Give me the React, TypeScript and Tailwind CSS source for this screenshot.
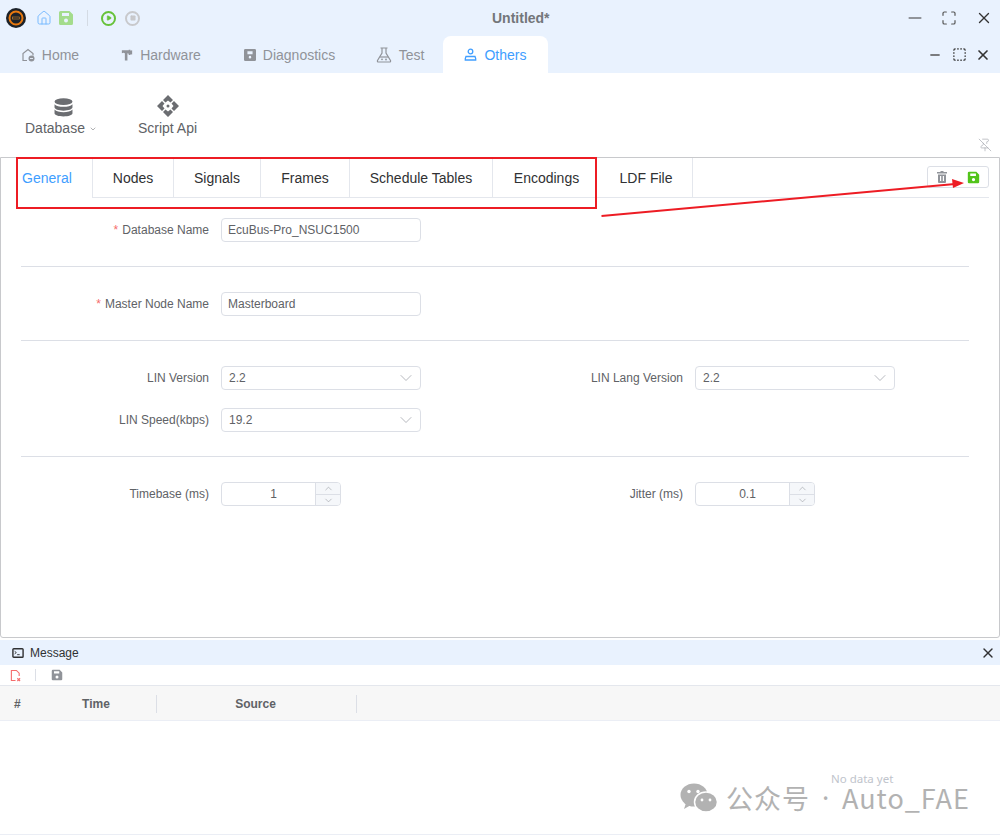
import { ChevronDown, ChevronUp, Minus, Play, Square, X, Home, Maximize, PinOff, SquareDashed } from "lucide-react";
import type { ReactNode } from "react";

const font = { fontFamily: '"Liberation Sans", Arial, sans-serif' };

function SaveIcon({ className }: { className: string }) {
  return (
    <svg viewBox="0 0 16 16" className={className} fill="currentColor">
      <path d="M2.5 1h9L15 4.500v9a1.500 1.500 0 0 1-1.500 1.500h-11A1.500 1.500 0 0 1 1 13.500v-11A1.500 1.500 0 0 1 2.500 1zM4 3v3h7V3zm4 5.500a2 2 0 1 0 0 4 2 2 0 0 0 0-4z" fillRule="evenodd" />
    </svg>
  );
}

function HomeBadgeIcon() {
  return (
    <svg viewBox="0 0 14 14" className="h-[14px] w-[14px]" fill="none" stroke="currentColor" strokeWidth="1.200">
      <path d="M6 12.500H2V5.500L7 1.500l5 4v2" />
      <circle cx="10.500" cy="10.500" r="3" fill="currentColor" stroke="none" />
      <path d="M9 10.500h3" stroke="#e9f2fe" strokeWidth="0.900" />
    </svg>
  );
}

function HammerIcon() {
  return (
    <svg viewBox="0 0 14 14" className="h-[14px] w-3" fill="currentColor">
      <path d="M1 1.500h8V1h2v1l2-.5v5l-2-.5v1H9V5.500L7.500 5v8.500h-3V5L3 4.500 1 5z" />
    </svg>
  );
}

function DiagnosticsIcon() {
  return (
    <svg viewBox="0 0 14 14" className="h-[14px] w-3" fill="currentColor">
      <path d="M1.500 0h11A1.500 1.500 0 0 1 14 1.500v11a1.500 1.500 0 0 1-1.500 1.500h-11A1.500 1.500 0 0 1 0 12.500v-11A1.500 1.500 0 0 1 1.500 0zM4 2.500V6h6V2.500zM7 8a1.500 1.500 0 1 0 0 3 1.500 1.500 0 0 0 0-3z" fillRule="evenodd" />
    </svg>
  );
}

function FlaskIcon() {
  return (
    <svg viewBox="0 0 16 16" className="h-4 w-4" fill="none" stroke="currentColor" strokeWidth="1.200">
      <path d="M4.500 1h7M6 1v5L1.500 13.500c-.4.800.1 1.500 1 1.500h11c.9 0 1.400-.7 1-1.500L10 6V1" />
      <path d="M4 10h8" />
      <circle cx="6" cy="12.300" r="0.900" fill="currentColor" stroke="none" />
      <circle cx="10" cy="12.500" r="0.900" fill="currentColor" stroke="none" />
    </svg>
  );
}

function PersonIcon() {
  return (
    <svg viewBox="0 0 13 13" className="h-[13px] w-[13px]" fill="none" stroke="currentColor" strokeWidth="1.300">
      <circle cx="6.500" cy="3.500" r="2.300" />
      <path d="M2 8.500h9l.7 2v1.500H1.300v-1.500z" />
    </svg>
  );
}

function TrashIcon() {
  return (
    <svg viewBox="0 0 10 12" className="h-3 w-[10px]" fill="#909399">
      <path d="M3.500 0h3v1H10v1.500H0V1h3.500zM1 3.500h8V11a1 1 0 0 1-1 1H2a1 1 0 0 1-1-1zM3 5v5h1.200V5zm2.800 0v5H7V5z" fillRule="evenodd" />
    </svg>
  );
}

function NavTab({ icon, label, active, width }: { icon: ReactNode; label: string; active?: boolean; width: string }) {
  return (
    <div className={`${width} flex h-[37px] items-center justify-center gap-[7px] text-sm ${active ? "rounded-t-lg bg-white text-[#409eff]" : "text-[#909399]"}`}>
      {icon}
      <span>{label}</span>
    </div>
  );
}

function SubTab({ label, width, active, last }: { label: string; width: string; active?: boolean; last?: boolean }) {
  return (
    <div className={`${width} flex h-10 items-center text-sm ${last ? "" : "border-r"} border-[#e4e7ed] ${active ? "justify-start pl-[1px] text-[#409eff]" : "justify-center border-b text-[#303133]"}`}>
      {label}
    </div>
  );
}

function Label({ text, required }: { text: string; required?: boolean }) {
  return (
    <label className="w-[188px] shrink-0 text-right text-xs text-[#606266]">
      {required && <span className="mr-1 text-[#f56c6c]">*</span>}
      {text}
    </label>
  );
}

function TextField({ label, value }: { label: string; value: string }) {
  return (
    <div className="flex h-6 items-center gap-3">
      <Label text={label} required />
      <div className="flex h-6 w-[200px] items-center rounded border border-[#dcdfe6] px-[6px] text-xs text-[#606266]">{value}</div>
    </div>
  );
}

function SelectField({ label, value }: { label: string; value: string }) {
  return (
    <div className="flex h-6 items-center gap-3">
      <Label text={label} />
      <div className="flex h-6 w-[200px] items-center justify-between rounded border border-[#dcdfe6] pl-[7px] pr-[4px] text-xs text-[#606266]">
        <span>{value}</span>
        <ChevronDown size={20} strokeWidth={1} className="text-[#a8abb2]" />
      </div>
    </div>
  );
}

function NumberField({ label, value }: { label: string; value: string }) {
  return (
    <div className="flex h-6 items-center gap-3">
      <Label text={label} />
      <div className="flex h-6 w-[120px] items-center overflow-hidden rounded border border-[#dcdfe6] text-xs text-[#606266]">
        <span className="flex-1 pl-[10px] text-center">{value}</span>
        <div className="flex h-full w-[25px] flex-col border-l border-[#dcdfe6] bg-[#f5f7fa] text-[#909399]">
          <div className="flex flex-1 items-center justify-center border-b border-[#dcdfe6]">
            <ChevronUp size={11} strokeWidth={1.2} />
          </div>
          <div className="flex flex-1 items-center justify-center">
            <ChevronDown size={11} strokeWidth={1.2} />
          </div>
        </div>
      </div>
    </div>
  );
}

export default function App() {
  return (
    <div className="relative h-[839px] w-[1000px] overflow-hidden bg-white" style={font}>
      {/* window title */}
      <div className="relative flex h-9 items-center bg-[#e9f2fe] pl-[6px]">
        <svg viewBox="0 0 20 20" className="h-5 w-5">
          <circle cx="10" cy="10" r="10" fill="#1c2229" />
          <circle cx="10" cy="10" r="6.500" fill="none" stroke="#e8790f" strokeWidth="2" />
          <rect x="6.500" y="9" width="7" height="2" fill="#1c2229" stroke="#f29a2e" strokeWidth="0.500" />
        </svg>
        <Home size={16} strokeWidth={1.5} className="ml-[10px] text-[#79bbff]" />
        <SaveIcon className="ml-[6px] h-[16px] w-[16px] text-[#a4dc8c]" />
        <div className="ml-[13px] h-4 w-px bg-[#d4dbe4]" />
        <div className="ml-[13px] flex h-[15px] w-[15px] items-center justify-center rounded-full border-2 border-[#67c23a]">
          <Play size={6} fill="#67c23a" className="text-[#67c23a]" />
        </div>
        <div className="ml-[9px] flex h-[15px] w-[15px] items-center justify-center rounded-full border-2 border-[#c8c9cc]">
          <Square size={6} fill="#c8c9cc" className="text-[#c8c9cc]" />
        </div>
        <div className="flex-1 pl-[352px] text-sm font-bold text-[#73767a]">Untitled*</div>
        <div className="flex items-center pr-[7px] text-[#555]">
          <Minus size={20} strokeWidth={1.8} className="text-[#73767a]" />
          <Maximize size={16} strokeWidth={1.8} className="ml-4" />
          <X size={18} strokeWidth={1.8} className="ml-[18px] text-[#333]" />
        </div>
      </div>

      {/* app tabs */}
      <div className="flex h-[37px] items-center bg-[#e9f2fe]">
        <NavTab width="w-[100px]" label="Home" icon={<HomeBadgeIcon />} />
        <NavTab width="w-[122px]" label="Hardware" icon={<HammerIcon />} />
        <NavTab width="w-[135px]" label="Diagnostics" icon={<DiagnosticsIcon />} />
        <NavTab width="w-[86px]" label="Test" icon={<FlaskIcon />} />
        <NavTab width="w-[105px]" label="Others" active icon={<PersonIcon />} />
        <div className="flex flex-1 items-center justify-end pr-[9px] text-[#333]">
          <Minus size={14} strokeWidth={2.8} className="text-[#555]" />
          <SquareDashed size={15} strokeWidth={2} className="ml-[10px]" />
          <X size={16} strokeWidth={2.5} className="ml-2" />
        </div>
      </div>

      {/* ribbon */}
      <div className="flex h-[84px] bg-white text-sm text-[#606266]">
        <div className="ml-[25px] flex flex-col items-center pt-[25px]">
          <svg viewBox="0 0 18 18" className="ml-[5px] h-[19px] w-[19px]" fill="#6b6d71">
            <ellipse cx="9" cy="3.500" rx="8.500" ry="3.200" />
            <path d="M.5 6c1.500 1.800 4.700 2.400 8.500 2.400S16 7.800 17.500 6v2.800c0 1.800-3.800 3.200-8.500 3.200S.5 10.600.5 8.800z" />
            <path d="M.5 11c1.500 1.800 4.700 2.400 8.500 2.400s7-.6 8.500-2.400v3.500c0 1.800-3.800 3-8.500 3s-8.500-1.200-8.500-3z" />
          </svg>
          <div className="mt-[1px] flex items-center gap-1">
            <span>Database</span>
            <ChevronDown size={8} strokeWidth={1.5} className="mt-px" />
          </div>
        </div>
        <div className="ml-[41px] flex flex-col items-center pt-[22px]">
          <svg viewBox="0 0 22 22" className="h-[22px] w-[22px]" fill="#6b6d71">
            <path d="M11 0l5 5-2.500 2.500L11 5.500 8.500 7.500 6 5z" />
            <path d="M11 22l-5-5 2.500-2.500 2.500 2 2.500-2L16 17z" />
            <path d="M0 11l5-5 2.500 2.500-2 2.500 2 2.500L5 16z" />
            <path d="M22 11l-5 5-2.500-2.500 2-2.500-2-2.500L17 6z" />
            <circle cx="11" cy="11" r="1.500" />
          </svg>
          <span className="mt-[1px]">Script Api</span>
        </div>
        <div className="flex flex-1 items-end justify-end pb-[5px] pr-[8px]">
          <PinOff size={14} strokeWidth={1.2} className="text-[#a8abb2]" />
        </div>
      </div>

      {/* database editor */}
      <div className="h-[481px] rounded-b-[3px] border border-[#c8c9cc] bg-white">
        <div className="mr-[10px] flex h-10 pl-5">
          <SubTab width="w-[72px]" label="General" active />
          <SubTab width="w-[81px]" label="Nodes" />
          <SubTab width="w-[87px]" label="Signals" />
          <SubTab width="w-[89px]" label="Frames" />
          <SubTab width="w-[143px]" label="Schedule Tables" />
          <SubTab width="w-[107px]" label="Encodings" last />
          <SubTab width="w-[93px]" label="LDF File" />
          <div className="flex flex-1 justify-end border-b border-[#e4e7ed] pt-2">
            <div className="flex h-[22px] w-[62px] items-center justify-between rounded-[3px] border border-[#dcdfe6] pl-[9px] pr-2">
              <TrashIcon />
              <SaveIcon className="h-[13px] w-[13px] text-[#52c41a]" />
            </div>
          </div>
        </div>

        <div className="ml-5 mr-[30px] flex flex-col pt-5">
          <TextField label="Database Name" value="EcuBus-Pro_NSUC1500" />
          <div className="mb-[25px] mt-6 h-px bg-[#dcdfe6]" />
          <TextField label="Master Node Name" value="Masterboard" />
          <div className="mb-[25px] mt-6 h-px bg-[#dcdfe6]" />
          <div className="grid grid-cols-2 gap-y-[18px]">
            <SelectField label="LIN Version" value="2.2" />
            <SelectField label="LIN Lang Version" value="2.2" />
            <SelectField label="LIN Speed(kbps)" value="19.2" />
          </div>
          <div className="mb-[25px] mt-6 h-px bg-[#dcdfe6]" />
          <div className="grid grid-cols-2">
            <NumberField label="Timebase (ms)" value="1" />
            <NumberField label="Jitter (ms)" value="0.1" />
          </div>
        </div>
      </div>

      {/* message panel */}
      <div className="mt-[2px] flex h-[25px] items-center justify-between bg-[#e9f2fe] pl-3 pr-1 text-xs text-[#303133]">
        <div className="flex items-center gap-[6px]">
          <svg viewBox="0 0 14 12" className="h-[10px] w-3" fill="none" stroke="#303133" strokeWidth="1.700">
            <rect x="0.900" y="0.900" width="12.200" height="10.200" rx="1" />
            <path d="M3 4l2 1.500L3 7M6 8h3" strokeWidth="1.100" />
          </svg>
          <span>Message</span>
        </div>
        <X size={16} strokeWidth={2} />
      </div>
      <div className="flex h-[21px] items-center border-b border-[#e4e7ed] pl-[10px]">
        <svg viewBox="0 0 12 14" className="h-[13px] w-[11px]" fill="none" stroke="#f56c6c" strokeWidth="1.200">
          <path d="M6 12.500H1.500v-11H7l3 3v3" />
          <path d="M8 10l3 3M11 10l-3 3" />
        </svg>
        <div className="ml-[14px] h-3 w-px bg-[#dcdfe6]" />
        <SaveIcon className="ml-[15px] h-3 w-3 text-[#909399]" />
      </div>
      <div className="flex h-[35px] items-center border-b border-[#ebeef5] bg-[#f7f7f7] pt-[1px] text-xs font-bold text-[#606266]">
        <div className="w-[36px] pl-[14px]">#</div>
        <div className="flex h-[18px] w-[121px] items-center justify-center border-r border-[#dcdfe6]">Time</div>
        <div className="flex h-[18px] w-[200px] items-center justify-center border-r border-[#dcdfe6] pr-[2px]">Source</div>
      </div>
      <div className="h-[114px] border-b border-[#ebeef5] bg-white" />

      {/* annotation drawn over the screenshot */}
      <div className="pointer-events-none absolute left-[16px] top-[157px] h-[52px] w-[581px] border-2 border-[#ed1c24]" />
      <svg className="pointer-events-none absolute left-[600px] top-[172px] h-[48px] w-[385px]" viewBox="0 0 385 48">
        <path d="M1.500 44L355 12" stroke="#ed1c24" strokeWidth="2" />
        <path d="M364 11l-12-4 1 9z" fill="#ed1c24" />
      </svg>

      {/* watermark */}
      <div className="absolute left-[680px] top-[782px] flex items-center text-[#b2b2b2]">
        <svg viewBox="0 0 38 32" className="h-8 w-[38px]" fill="#b2b2b2">
          <ellipse cx="14" cy="13" rx="13.500" ry="11.500" />
          <path d="M6 21l-2 6 7-4z" />
          <ellipse cx="26" cy="20" rx="11.500" ry="10" fill="#b2b2b2" stroke="#fff" strokeWidth="1.500" />
          <circle cx="9" cy="9.500" r="1.700" fill="#fff" />
          <circle cx="18" cy="9.500" r="1.700" fill="#fff" />
          <circle cx="22" cy="18" r="1.400" fill="#fff" />
          <circle cx="30" cy="18" r="1.400" fill="#fff" />
        </svg>
        <span className="ml-[8px] flex items-center text-[27px] leading-[26px] tracking-[1px]" style={{ fontFamily: '"Noto Sans CJK SC", "Noto Sans", sans-serif' }}>
          <span>公众号</span>
          <span className="ml-[12px] w-[5px] text-center" style={{ fontFamily: '"Noto Sans", sans-serif' }}>·</span>
          <span className="ml-[15px]">Auto_FAE</span>
        </span>
      </div>
      <div className="absolute left-[831px] top-[773px] text-[11.5px] leading-3 text-[#c0c4cc]" style={{ fontFamily: '"Noto Sans", "Liberation Sans", sans-serif' }}>
        No data yet
      </div>
    </div>
  );
}
